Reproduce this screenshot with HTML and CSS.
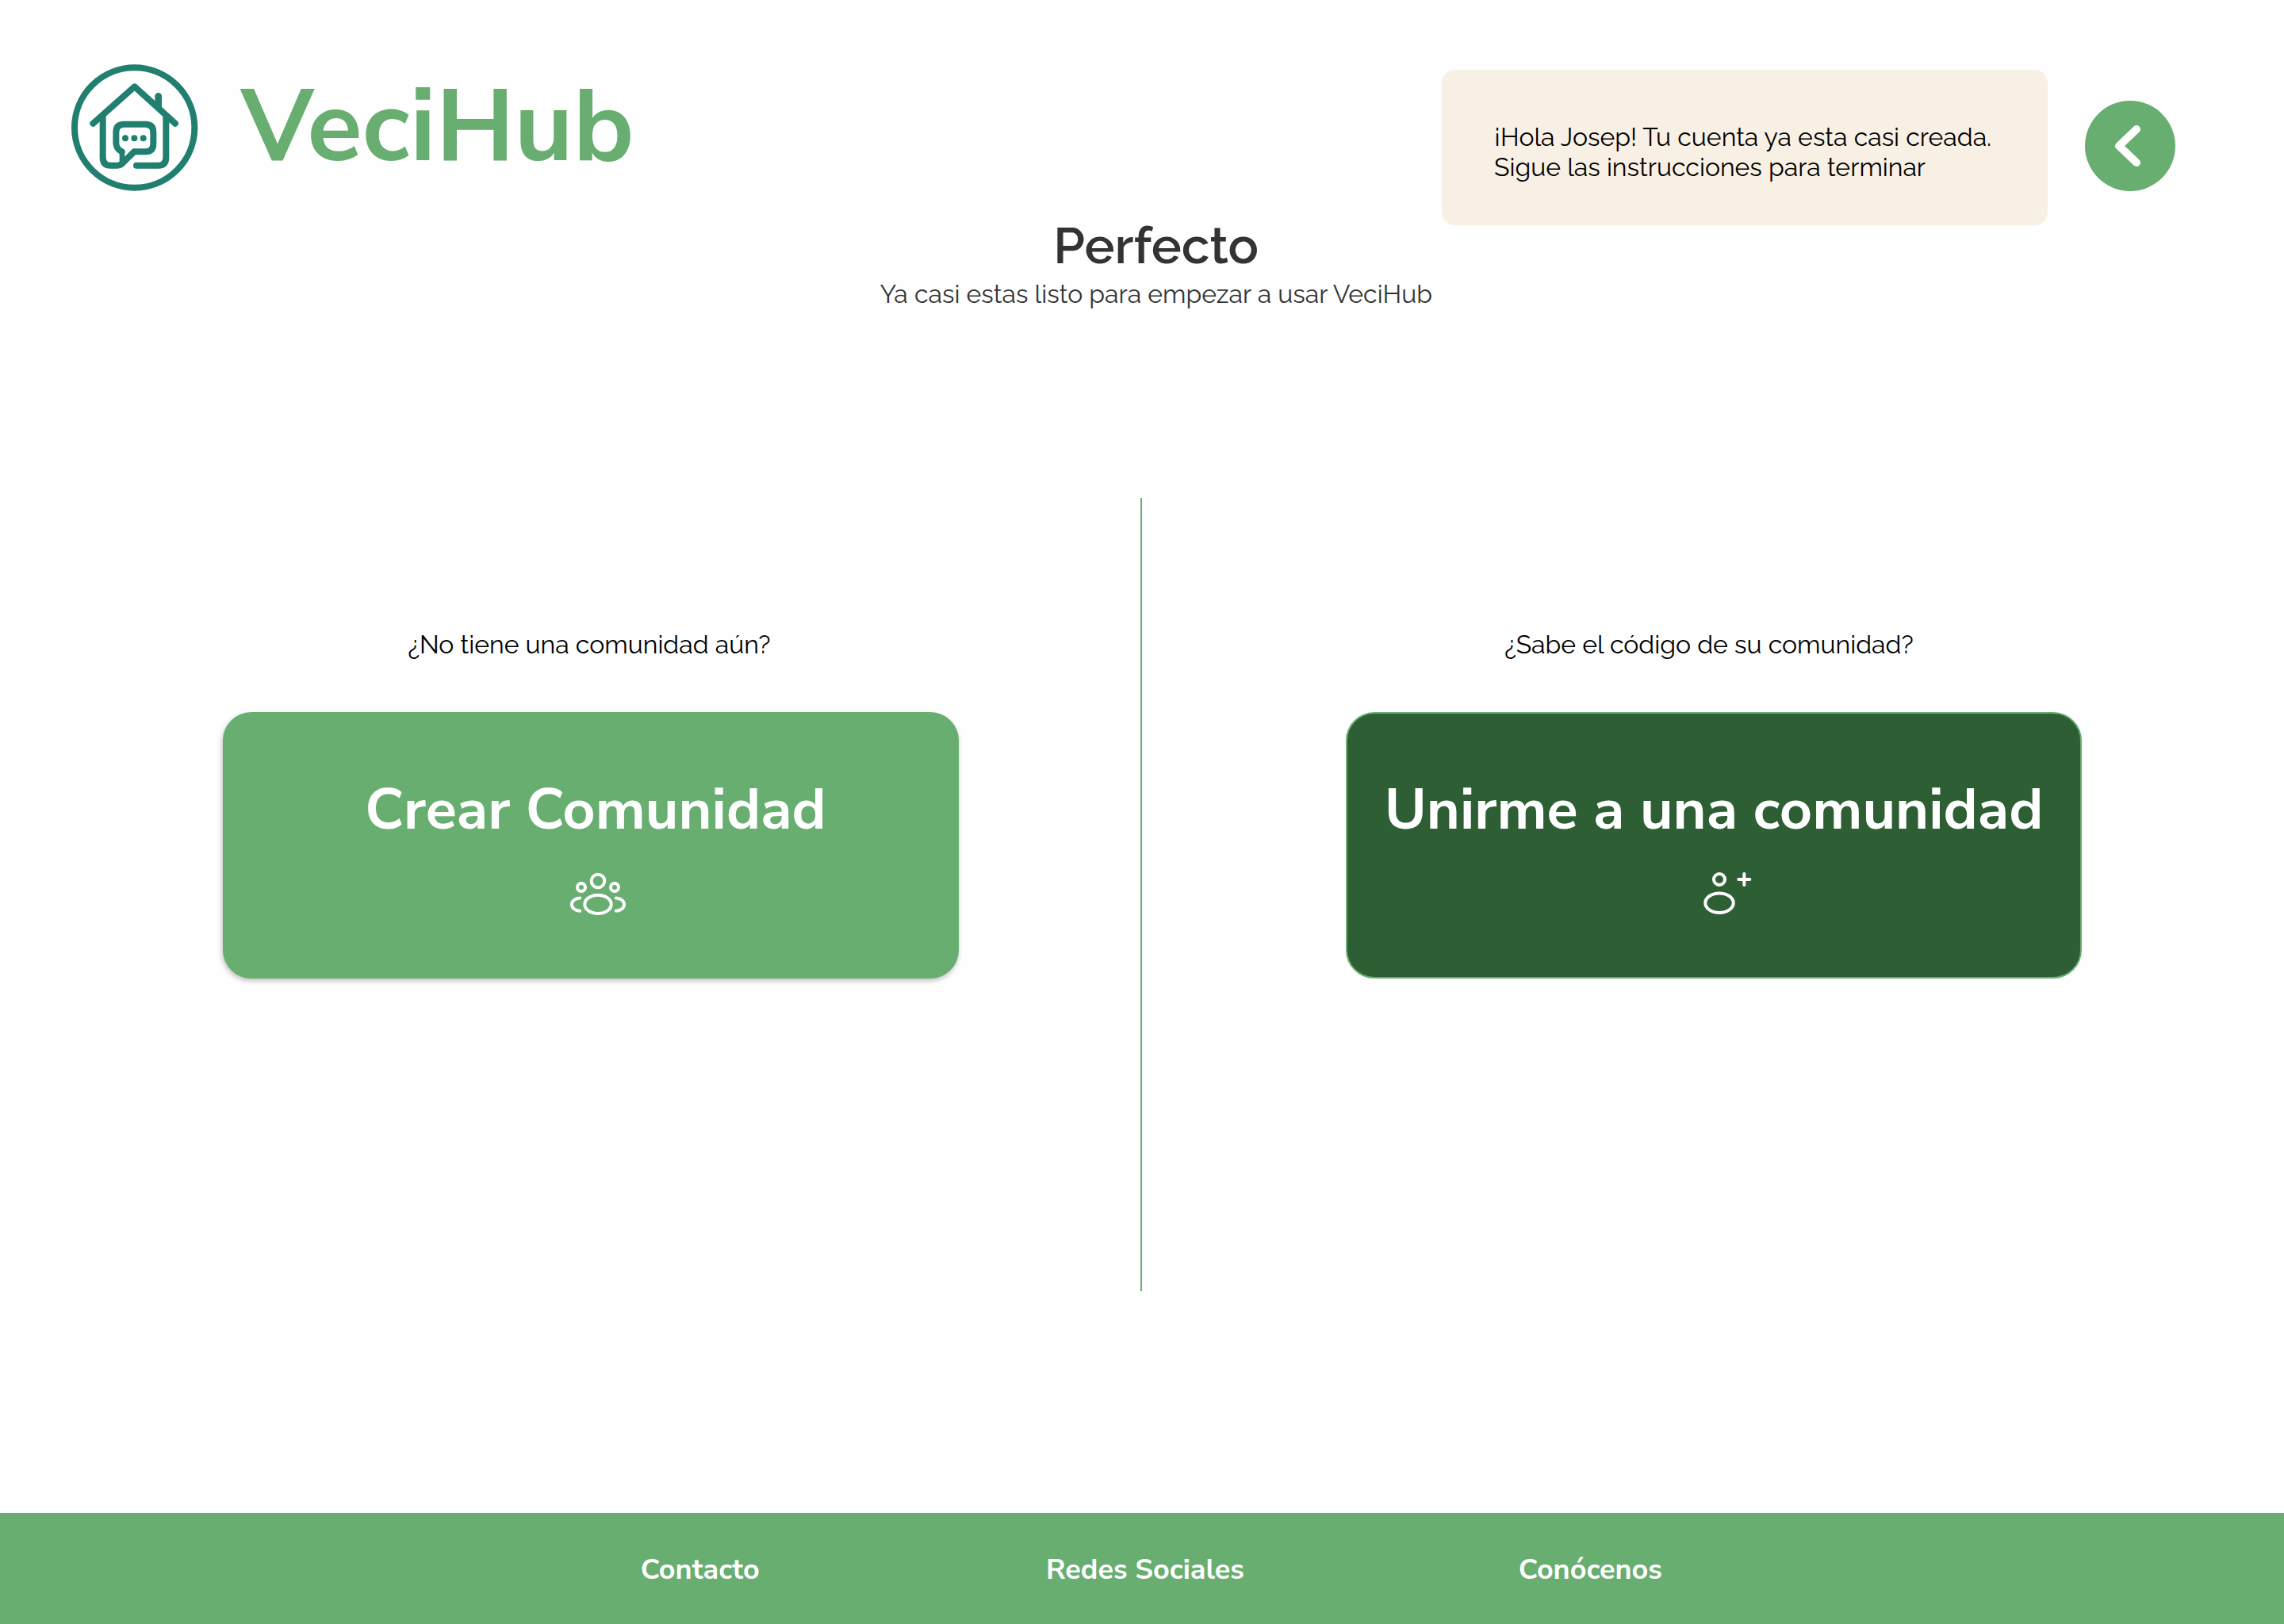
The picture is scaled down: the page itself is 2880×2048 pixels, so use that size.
FILE: index.html
```html
<!DOCTYPE html>
<html lang="es">
<head>
  <meta charset="utf-8">
  <meta name="viewport" content="width=device-width, initial-scale=1">
  <title>VeciHub</title>
  <link rel="stylesheet" href="styles.css">
</head>
<body class="page">
  <header class="header">
    <div class="brand">
      <svg class="brand__logo" viewBox="60 60 480 480" aria-hidden="true">
        <g fill="none" stroke="currentColor" stroke-width="24" stroke-linecap="round" stroke-linejoin="round">
          <circle cx="299" cy="303" r="227"/>
          <path d="M142 287 L299 148 L453 287"/>
          <path d="M389 184 V225" stroke-width="26"/>
          <path d="M179 262 V416 Q179 446 209 446 H234 Q245 446 253 438 L297 394 H340 Q370 394 370 364 V320 Q370 290 340 290 H259 Q229 290 229 320 V362 Q230 384 251 394"/>
          <path d="M252 394 V436" stroke-width="20"/>
          <path d="M418 262 V416 Q418 446 388 446 H306"/>
        </g>
        <g fill="currentColor">
          <circle cx="264" cy="343" r="12"/>
          <circle cx="298" cy="343" r="12"/>
          <circle cx="332" cy="343" r="12"/>
        </g>
      </svg>
      <span class="brand__name">VeciHub</span>
    </div>

    <div class="intro">
      <h1 class="intro__title">Perfecto</h1>
      <p class="intro__text">Ya casi estas listo para empezar a usar VeciHub</p>
    </div>

    <div class="actions">
      <p class="notice">¡Hola Josep! Tu cuenta ya esta casi creada.<br>Sigue las instrucciones para terminar</p>
      <button class="back" type="button" aria-label="Volver">
        <svg class="back__icon" viewBox="0 0 114 114" aria-hidden="true">
          <path d="M65 36 L43 57 L65 78" fill="none" stroke="currentColor" stroke-width="10" stroke-linecap="round" stroke-linejoin="round"/>
        </svg>
      </button>
    </div>
  </header>

  <main class="choices">
    <section class="choice choice--create">
      <p class="choice__label" id="create-label">¿No tiene una comunidad aún?</p>
      <button class="card card--create" type="button" aria-describedby="create-label">
        <span class="card__title">Crear Comunidad</span>
        <svg class="card__icon" viewBox="0 0 96 72" aria-hidden="true">
          <g fill="none" stroke="currentColor" stroke-width="4" stroke-linecap="round">
            <circle cx="51" cy="19" r="8.3"/>
            <circle cx="30" cy="27" r="5"/>
            <circle cx="72" cy="27" r="5"/>
            <ellipse cx="51" cy="48.4" rx="16.7" ry="11.7"/>
            <path d="M28.3 40.4 C14.5 41.2 14.5 55.9 28.3 56.7"/>
            <path d="M73.7 40.4 C87.5 41.2 87.5 55.9 73.7 56.7"/>
          </g>
        </svg>
      </button>
    </section>

    <div class="divider"></div>

    <section class="choice choice--join">
      <p class="choice__label" id="join-label">¿Sabe el código de su comunidad?</p>
      <button class="card card--join" type="button" aria-describedby="join-label">
        <span class="card__title">Unirme a una comunidad</span>
        <svg class="card__icon" viewBox="0 0 96 72" aria-hidden="true">
          <g fill="none" stroke="currentColor" stroke-width="4" stroke-linecap="round">
            <circle cx="55" cy="17" r="7"/>
            <ellipse cx="55" cy="46.7" rx="17.7" ry="12.3"/>
            <path d="M86.3 10 V24 M79.3 17 H93.3"/>
          </g>
        </svg>
      </button>
    </section>
  </main>

  <footer class="footer">
    <nav class="footer__nav">
      <a class="footer__link" href="#contacto">Contacto</a>
      <a class="footer__link" href="#redes">Redes Sociales</a>
      <a class="footer__link" href="#conocenos">Conócenos</a>
    </nav>
  </footer>
</body>
</html>
```
FILE: styles.css
```css
:root {
  --green: #68ae70;
  --green-dark: #2e5f34;
  --teal: #217f70;
  --cream: #f9f0e5;
  --ink: #333333;
  --page: #fefefe;
  --display: "Nunito Sans", Nunito, Lato, sans-serif;
  --text: Raleway, "Open Sans", sans-serif;
}

* {
  box-sizing: border-box;
}

.page {
  display: flex;
  flex-direction: column;
  min-height: 100vh;
  margin: 0;
  background: var(--page);
  color: #000000;
  font-family: var(--text);
  font-size: 32px;
  line-height: 38px;
}

/* Header */
.header {
  display: grid;
  grid-template-columns: 1fr auto auto;
  align-items: start;
  column-gap: 12px;
  padding: 80px 137px 0 90px;
}

.brand {
  display: flex;
  align-items: center;
  gap: 54px;
}

.brand__logo {
  flex: none;
  width: 160px;
  height: 160px;
  overflow: visible;
  color: var(--teal);
}

.brand__name {
  color: var(--green);
  font-family: var(--display);
  font-size: 128px;
  font-weight: 700;
  line-height: 160px;
}

.intro {
  padding-top: 192px;
  color: var(--ink);
  text-align: center;
}

.intro__title {
  margin: 0 0 4px;
  font-size: 64px;
  font-weight: 600;
  line-height: 76px;
}

.intro__text {
  margin: 0;
}

.actions {
  display: flex;
  align-items: center;
  gap: 47px;
  padding-top: 8px;
}

.notice {
  width: 764px;
  margin: 0;
  padding: 66px 66px 54px;
  border-radius: 16px;
  background: var(--cream);
}

.back {
  flex: none;
  width: 114px;
  height: 114px;
  margin: 0 0 4px;
  padding: 0;
  border: 0;
  border-radius: 50%;
  background: var(--green);
  color: #ffffff;
  cursor: pointer;
}

.back__icon {
  display: block;
  width: 100%;
  height: 100%;
}

/* Two ways to continue */
.choices {
  display: grid;
  flex: 1;
  grid-template-columns: 1fr 2px 1fr;
  padding: 238px 2px 280px 0;
}

.divider {
  background: var(--green);
}

.choice {
  display: flex;
  flex-direction: column;
  align-items: center;
  gap: 66px;
  padding-top: 166px;
}

.choice--create {
  padding-left: 52px;
}

.choice--join {
  padding-left: 4px;
}

.choice__label {
  margin: 0;
  padding-right: 4px;
}

.choice--join .choice__label {
  padding-right: 12px;
}

.card {
  display: flex;
  flex-direction: column;
  align-items: center;
  gap: 22px;
  width: 928px;
  height: 336px;
  padding: 72px 0 0;
  border: 2px solid var(--green);
  border-radius: 36px;
  color: #ffffff;
  font-family: var(--display);
  font-size: 72px;
  font-weight: 700;
  line-height: 98px;
  white-space: nowrap;
  cursor: pointer;
}

.card--create {
  padding-left: 12px;
  background: var(--green);
  box-shadow: -1px 3px 6px rgba(0, 0, 0, 0.25);
}

.card--join {
  background: var(--green-dark);
}

.card__icon {
  width: 96px;
  height: 72px;
}

/* Footer */
.footer {
  padding: 47px 0 43px 8px;
  background: var(--green);
}

.footer__nav {
  display: grid;
  grid-template-columns: repeat(3, 1fr);
  max-width: 1684px;
  margin: 0 auto;
  text-align: center;
}

.footer__link {
  color: #ffffff;
  font-family: var(--display);
  font-size: 36px;
  font-weight: 700;
  line-height: 50px;
  text-decoration: none;
}
```
